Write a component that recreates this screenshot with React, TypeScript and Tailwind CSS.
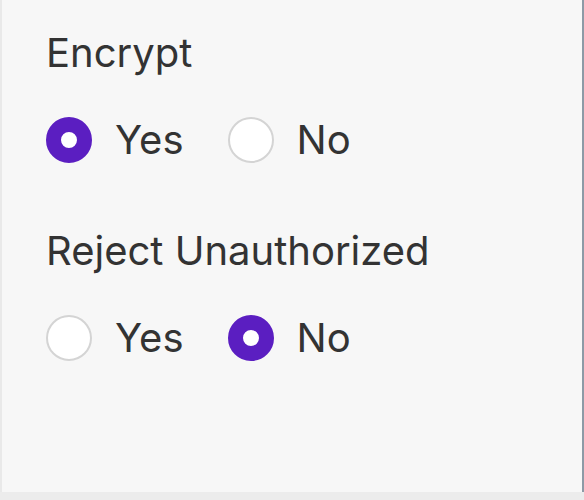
import React, { useState } from "react";

type Choice = "yes" | "no";

function Radio({ checked, label, onClick }: { checked: boolean; label: string; onClick: () => void }) {
  return (
    <button type="button" onClick={onClick} className="flex items-center gap-[23px] cursor-pointer">
      <span
        className={
          checked
            ? "w-[46px] h-[46px] rounded-full border-[15px] border-[#5b1ec1] bg-white box-border"
            : "w-[46px] h-[46px] rounded-full border-2 border-[#d4d4d4] bg-white box-border"
        }
      />
      <span className="text-[40px] leading-none text-[#333333]">{label}</span>
    </button>
  );
}

function Field({ title, value, onChange }: { title: string; value: Choice; onChange: (v: Choice) => void }) {
  return (
    <div className="flex flex-col gap-[44px]">
      <div className="text-[40px] leading-none text-[#333333]">{title}</div>
      <div className="flex items-center gap-[44px]">
        <Radio checked={value === "yes"} label="Yes" onClick={() => onChange("yes")} />
        <Radio checked={value === "no"} label="No" onClick={() => onChange("no")} />
      </div>
    </div>
  );
}

export default function App() {
  const [encrypt, setEncrypt] = useState<Choice>("yes");
  const [reject, setReject] = useState<Choice>("no");

  return (
    <div className="w-[584px] h-[500px] flex flex-col bg-[#f7f7f7] font-['Inter',sans-serif]">
      <div className="flex-1 flex border-l-2 border-[#e9e9e9] border-r-2 border-r-[#8d9aa6]">
        <div className="flex flex-col gap-[68px] pl-[44px] pt-[33px]">
          <Field title="Encrypt" value={encrypt} onChange={setEncrypt} />
          <Field title="Reject Unauthorized" value={reject} onChange={setReject} />
        </div>
      </div>
      <div className="h-[8px] bg-[#ececec]" />
    </div>
  );
}
